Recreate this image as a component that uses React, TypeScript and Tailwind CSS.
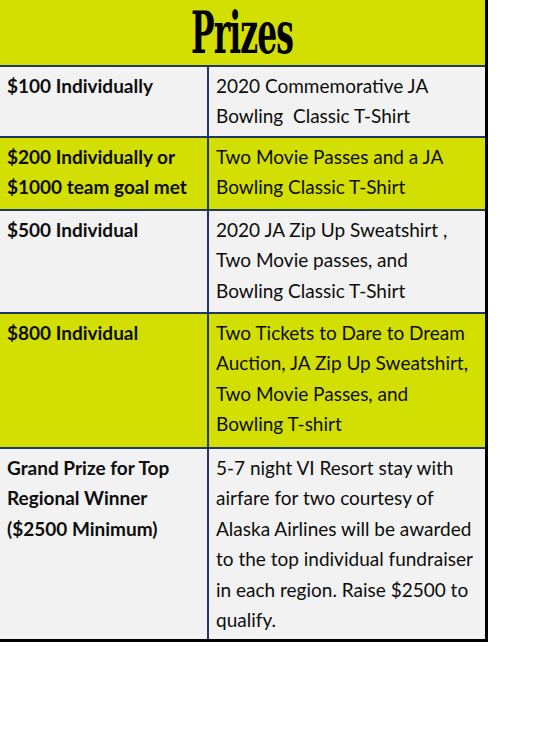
import React from 'react';

type Row = {
  amount: string[];
  prize: string[];
  tint: 'yellow' | 'gray';
  height: string;
};

const rows: Row[] = [
  {
    amount: ['$100 Individually'],
    prize: ['2020 Commemorative JA', 'Bowling\u00a0\u00a0Classic T-Shirt'],
    tint: 'gray',
    height: 'h-[71px]',
  },
  {
    amount: ['$200 Individually or', '$1000 team goal met'],
    prize: ['Two Movie Passes and a JA', 'Bowling Classic T-Shirt'],
    tint: 'yellow',
    height: 'h-[73px]',
  },
  {
    amount: ['$500 Individual'],
    prize: ['2020 JA Zip Up Sweatshirt ,', 'Two Movie passes, and', 'Bowling Classic T-Shirt'],
    tint: 'gray',
    height: 'h-[103px]',
  },
  {
    amount: ['$800 Individual'],
    prize: ['Two Tickets to Dare to Dream', 'Auction, JA Zip Up Sweatshirt,', 'Two Movie Passes, and', 'Bowling T-shirt'],
    tint: 'yellow',
    height: 'h-[135px]',
  },
  {
    amount: ['Grand Prize for Top', 'Regional Winner', '($2500 Minimum)'],
    prize: [
      '5-7 night VI Resort stay with',
      'airfare for two courtesy of',
      'Alaska Airlines will be awarded',
      'to the top individual fundraiser',
      'in each region. Raise $2500 to',
      'qualify.',
    ],
    tint: 'gray',
    height: 'flex-1',
  },
];

const App: React.FC = () => {
  return (
    <div className="w-[540px] h-[750px] bg-white font-['Lato',sans-serif] text-[#0d0d0d]">
      <div className="w-[488px] h-[642px] flex flex-col border-r-[3px] border-b-[3px] border-black">
        {/* Title */}
        <div className="h-[67px] shrink-0 bg-[#d3df00] border-b-[2px] border-[#203864] flex items-center justify-center">
          <h1 className="font-['DejaVu_Serif_Condensed','DejaVu_Serif',serif] font-bold text-[58px] leading-none text-black scale-x-[0.6] tracking-tight">
            Prizes
          </h1>
        </div>

        {rows.map((row, i) => (
          <div
            key={i}
            className={`flex ${row.height} ${i < rows.length - 1 ? 'border-b-[2px] border-[#203864]' : ''} ${
              row.tint === 'yellow' ? 'bg-[#d3df00]' : 'bg-[#f2f2f2]'
            }`}
          >
            <div className="w-[209px] shrink-0 border-r-[2px] border-[#203864] pl-[7px] pt-[4px] font-bold text-[19px] leading-[30.4px] whitespace-nowrap">
              {row.amount.map((line) => (
                <div key={line}>{line}</div>
              ))}
            </div>
            <div className="flex-1 pl-[7px] pt-[4px] text-[19px] leading-[30.4px] whitespace-nowrap">
              {row.prize.map((line) => (
                <div key={line}>{line}</div>
              ))}
            </div>
          </div>
        ))}
      </div>
    </div>
  );
};

export default App;
